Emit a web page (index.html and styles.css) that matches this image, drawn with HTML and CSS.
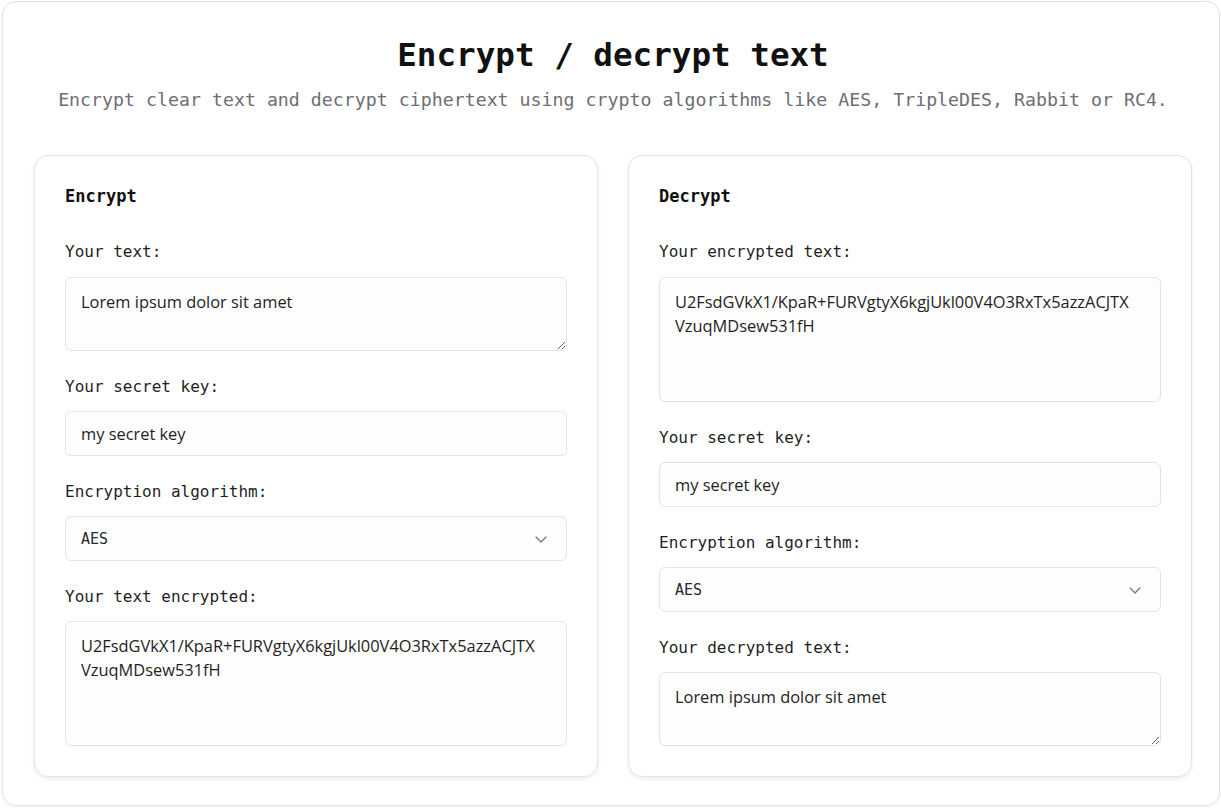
FILE: index.html
```html
<!DOCTYPE html>
<html lang="en">
<head>
<meta charset="utf-8">
<title>Encrypt / decrypt text</title>
<link rel="stylesheet" href="styles.css">
</head>
<body>
<div class="page">
  <header class="head">
    <h1 class="title">Encrypt / decrypt text</h1>
    <p class="subtitle">Encrypt clear text and decrypt ciphertext using crypto algorithms like AES, TripleDES, Rabbit or RC4.</p>
  </header>
  <div class="grid">
    <section class="card">
      <h2 class="card-title">Encrypt</h2>
      <div class="field">
        <label class="label">Your text:</label>
        <textarea class="control area-sm">Lorem ipsum dolor sit amet</textarea>
      </div>
      <div class="field">
        <label class="label">Your secret key:</label>
        <input class="control input" value="my secret key">
      </div>
      <div class="field">
        <label class="label">Encryption algorithm:</label>
        <div class="select">
          <span>AES</span>
          <svg class="chev" width="14" height="14" viewBox="0 0 14 14"><path d="M2 5l5 5 5-5" fill="none" stroke="#777" stroke-width="1.3" stroke-linecap="round" stroke-linejoin="round"/></svg>
        </div>
      </div>
      <div class="field">
        <label class="label">Your text encrypted:</label>
        <textarea class="control area-lg fixed" readonly>U2FsdGVkX1/KpaR+FURVgtyX6kgjUkl00V4O3RxTx5azzACJTXVzuqMDsew531fH</textarea>
      </div>
    </section>
    <section class="card">
      <h2 class="card-title">Decrypt</h2>
      <div class="field">
        <label class="label">Your encrypted text:</label>
        <textarea class="control area-lg fixed">U2FsdGVkX1/KpaR+FURVgtyX6kgjUkl00V4O3RxTx5azzACJTXVzuqMDsew531fH</textarea>
      </div>
      <div class="field">
        <label class="label">Your secret key:</label>
        <input class="control input" value="my secret key">
      </div>
      <div class="field">
        <label class="label">Encryption algorithm:</label>
        <div class="select">
          <span>AES</span>
          <svg class="chev" width="14" height="14" viewBox="0 0 14 14"><path d="M2 5l5 5 5-5" fill="none" stroke="#777" stroke-width="1.3" stroke-linecap="round" stroke-linejoin="round"/></svg>
        </div>
      </div>
      <div class="field">
        <label class="label">Your decrypted text:</label>
        <textarea class="control area-sm" readonly>Lorem ipsum dolor sit amet</textarea>
      </div>
    </section>
  </div>
</div>
</body>
</html>
```
FILE: styles.css
```css
html, body {
  margin: 0;
  padding: 0;
  background: #fff;
}
body {
  padding: 1px 1px 2px 2px;
  font-family: "DejaVu Sans Mono", "Liberation Mono", monospace;
  color: #1a1a1a;
}
.page {
  box-sizing: border-box;
  height: 805px;
  border: 1px solid #e4e4e7;
  border-radius: 14px;
  padding: 0 27px 0 31px;
  box-shadow: 0 1px 3px rgba(0,0,0,0.06);
}
.head {
  text-align: center;
  padding-top: 33px;
}
.title {
  margin: 0;
  font-size: 32.6px;
  line-height: 40px;
  font-weight: 700;
  color: #111;
}
.subtitle {
  margin: 13px 0 0;
  font-size: 18.25px;
  line-height: 24px;
  color: #6e6e73;
}
.grid {
  margin-top: 43px;
  display: grid;
  grid-template-columns: 1fr 1fr;
  gap: 30px;
}
.card {
  border: 1px solid #e4e4e7;
  border-radius: 14px;
  padding: 28px 30px 30px;
  display: flex;
  flex-direction: column;
  gap: 24px;
  box-shadow: 0 2px 5px rgba(0,0,0,0.07);
  background: #fff;
}
.card-title {
  margin: 0 0 8px;
  font-size: 17px;
  line-height: 24px;
  font-weight: 700;
  color: #111;
}
.field {
  display: flex;
  flex-direction: column;
}
.label {
  font-size: 16px;
  line-height: 24px;
  margin-bottom: 13px;
  color: #1f1f1f;
}
.field + .field .label {
  margin-bottom: 12px;
}
.control {
  box-sizing: border-box;
  width: 100%;
  margin: 0;
  border: 1px solid #e4e4e7;
  border-radius: 6px;
  background: #fdfdfd;
  font-family: "Open Sans", "Noto Sans", sans-serif;
  font-size: 16.4px;
  line-height: 24px;
  color: #1f1f1f;
  padding: 12px 22px 12px 15px;
  outline: none;
}
.area-sm {
  height: 74px;
  resize: vertical;
}
.area-lg {
  height: 125px;
}
.fixed {
  resize: none;
}
.input {
  height: 45px;
}
.select {
  box-sizing: border-box;
  height: 45px;
  border: 1px solid #e4e4e7;
  border-radius: 6px;
  background: #fdfdfd;
  display: flex;
  align-items: center;
  justify-content: space-between;
  padding: 0 18px 0 15px;
  font-size: 15px;
  color: #2a2a2a;
}
.chev {
  display: block;
}
```
